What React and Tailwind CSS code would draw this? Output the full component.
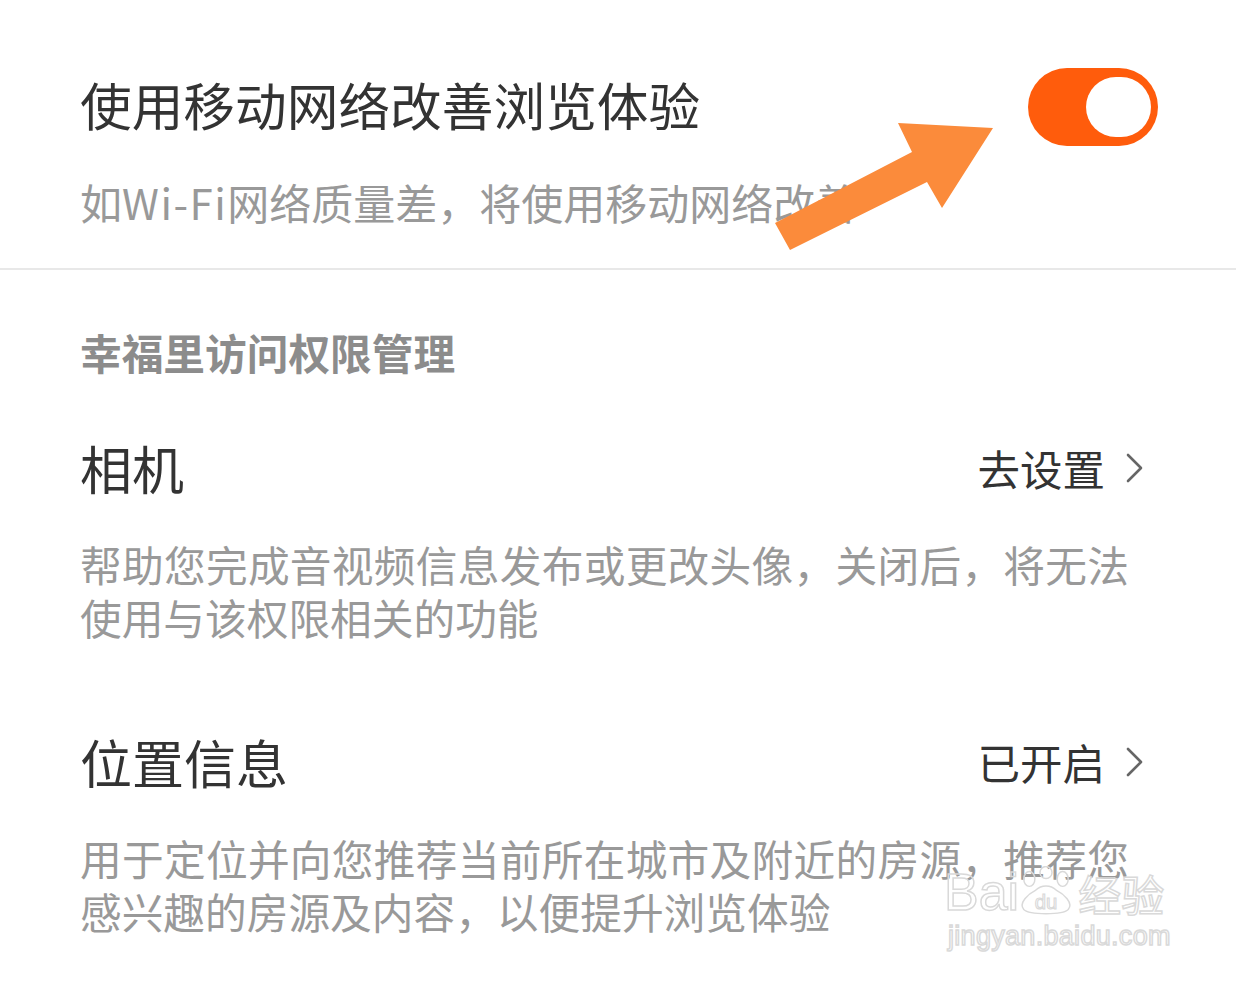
const font = { fontFamily: '"Noto Sans CJK SC", "Noto Sans", sans-serif' };

function Chevron() {
  return (
    <svg width="18" height="30" viewBox="0 0 18 30" className="shrink-0">
      <polyline points="2,2 15,15 2,28" fill="none" stroke="#666" strokeWidth="2.6" strokeLinecap="round" strokeLinejoin="round" />
    </svg>
  );
}

function Toggle() {
  return (
    <div className="flex h-[78px] w-[130px] shrink-0 items-center justify-end rounded-full bg-[#ff5c0c] pr-[7px]">
      <div className="h-[60px] w-[65px] rounded-full bg-white" />
    </div>
  );
}

function PermissionItem({ title, action, lines, top }) {
  return (
    <div className={top}>
      <div className="flex items-center justify-between">
        <span className="text-[52px] leading-[64px] text-[#333]">{title}</span>
        <div className="mr-[14px] flex items-center gap-[21px]">
          <span className="text-[42.5px] leading-[64px] text-[#333]">{action}</span>
          <Chevron />
        </div>
      </div>
      <div className="mt-[38px] flex flex-col text-[41.7px] leading-[53px] text-[#999]">
        <span className="w-[1049px] whitespace-nowrap text-justify [text-align-last:justify]">{lines[0]}</span>
        <span className="whitespace-nowrap">{lines[1]}</span>
      </div>
    </div>
  );
}

function Watermark() {
  const outline = 'text-transparent [-webkit-text-stroke:1.5px_#d9d9d9]';
  return (
    <div className="pointer-events-none absolute left-[944px] top-[862px] flex flex-col items-start" style={font}>
      <div className="flex items-end">
        <span className={`text-[52px] leading-[60px] ${outline}`} style={{ fontFamily: '"Liberation Sans", sans-serif' }}>Bai</span>
        <svg width="58" height="50" viewBox="0 0 62 54" className="mb-[6px] -ml-[2px]">
          <g fill="none" stroke="#d9d9d9" strokeWidth="1.6">
            <ellipse cx="13" cy="14" rx="6" ry="8" />
            <ellipse cx="31" cy="7" rx="6.5" ry="6.5" />
            <ellipse cx="49" cy="14" rx="6" ry="8" />
            <path d="M7 47 C1 40 12 30 20 26 C26 20 36 20 42 26 C50 30 61 40 55 47 C49 53 13 53 7 47 Z" />
          </g>
          <text x="31" y="46" textAnchor="middle" fontSize="22" fill="none" stroke="#d9d9d9" strokeWidth="1.2" fontFamily="Liberation Sans, sans-serif">du</text>
        </svg>
        <span className={`ml-[3px] mb-[2px] text-[43px] leading-[54px] ${outline}`}>经验</span>
      </div>
      <span className={`-mt-[2px] ml-[4px] text-[27px] leading-[32px] tracking-[0.3px] ${outline}`} style={{ fontFamily: '"Liberation Sans", sans-serif' }}>jingyan.baidu.com</span>
    </div>
  );
}

export default function App() {
  return (
    <div className="relative h-[987px] w-[1236px] overflow-hidden bg-white" style={font}>
      <div className="pl-[80px] pr-[78px]">
        <div className="flex items-start justify-between pt-[68px]">
          <span className="mt-[4px] text-[51.7px] leading-[64px] text-[#333]">使用移动网络改善浏览体验</span>
          <Toggle />
        </div>
        <p className="mt-[31px] whitespace-nowrap text-[42px] leading-[50px] text-[#999]">
          如<span className="tracking-[1.5px]">Wi-Fi</span>网络质量差，将使用移动网络改善
        </p>
      </div>
      <div className="mt-[41px] h-[2px] w-full bg-[#e8e8e8]" />
      <div className="pl-[80px] pr-[78px]">
        <h3 className="mt-[57px] text-[41.7px] font-bold leading-[50px] text-[#8c8c8c]">幸福里访问权限管理</h3>
        <PermissionItem
          top="mt-[59px]"
          title="相机"
          action="去设置"
          lines={['帮助您完成音视频信息发布或更改头像，关闭后，将无法', '使用与该权限相关的功能']}
        />
        <PermissionItem
          top="mt-[86px]"
          title="位置信息"
          action="已开启"
          lines={['用于定位并向您推荐当前所在城市及附近的房源，推荐您', '感兴趣的房源及内容，以便提升浏览体验']}
        />
      </div>

      {/* annotation arrow pointing at the switch */}
      <svg className="pointer-events-none absolute left-0 top-0" width="1236" height="987">
        <polygon points="775,223 912,152 898,123 993,128 942,208 927,182 790,250" fill="#fb8b3b" />
      </svg>

      <Watermark />
    </div>
  );
}
